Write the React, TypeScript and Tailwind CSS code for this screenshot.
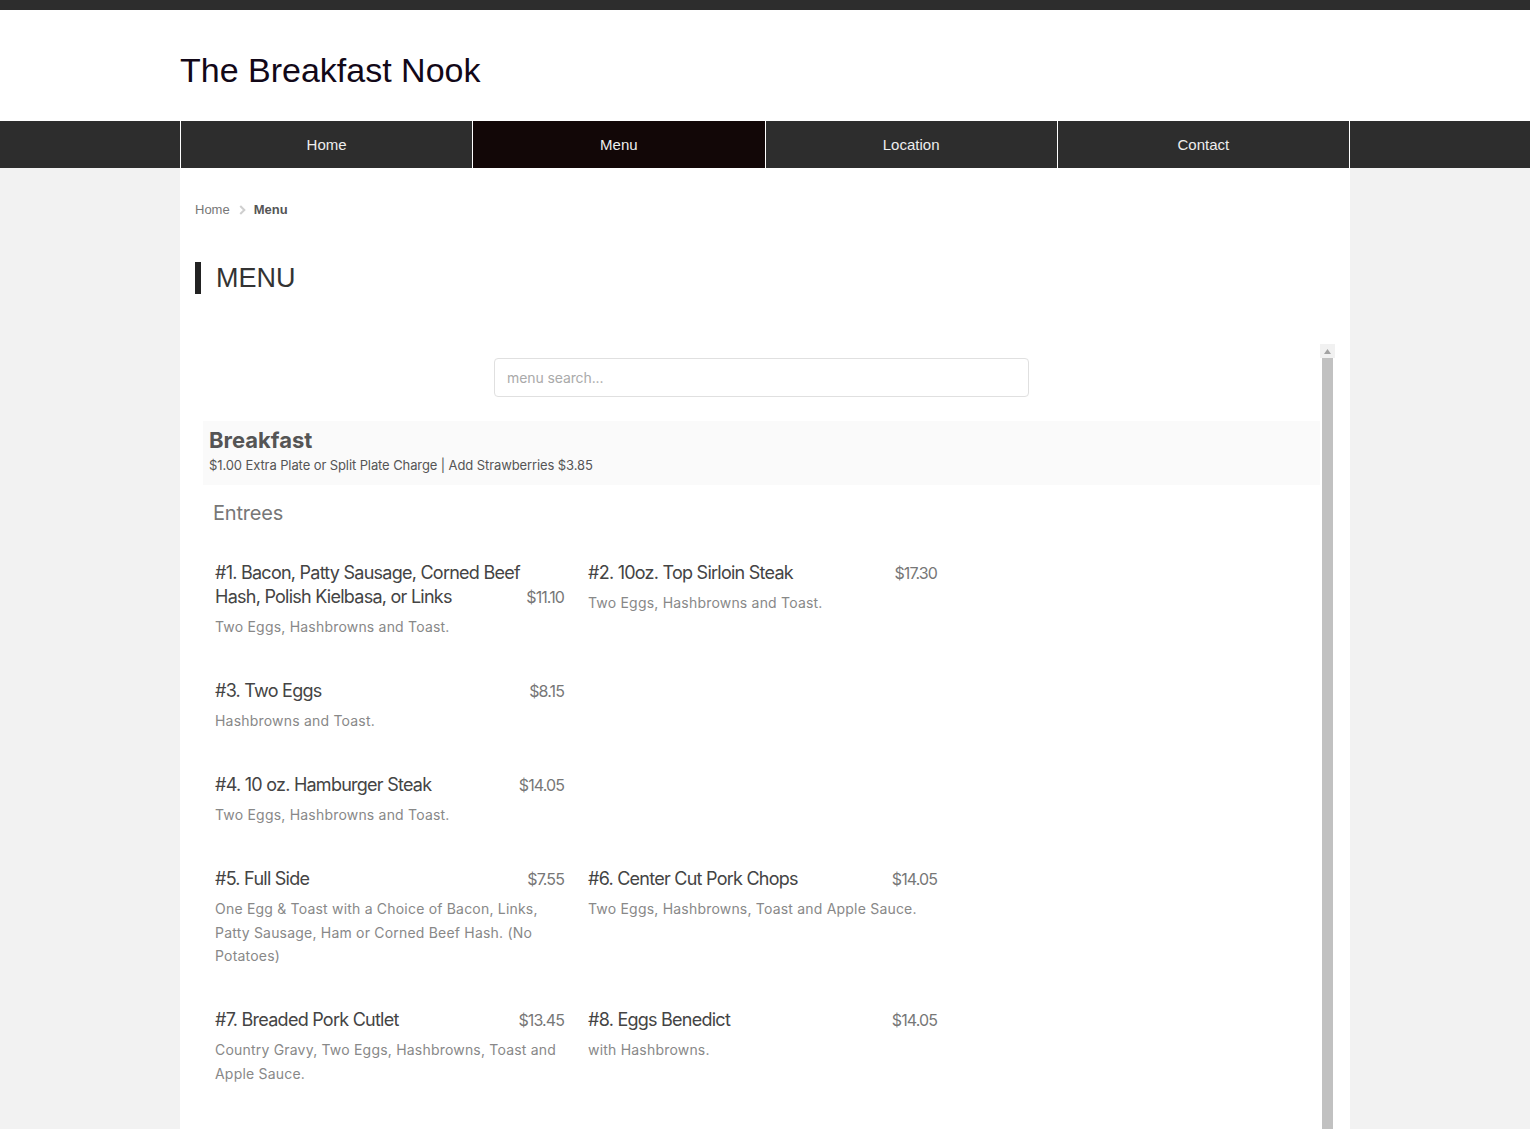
import React from "react";

const items = [
  [
    { t: "#1. Bacon, Patty Sausage, Corned Beef Hash, Polish Kielbasa, or Links", p: "$11.10", d: "Two Eggs, Hashbrowns and Toast." },
    { t: "#2. 10oz. Top Sirloin Steak", p: "$17.30", d: "Two Eggs, Hashbrowns and Toast." },
  ],
  [{ t: "#3. Two Eggs", p: "$8.15", d: "Hashbrowns and Toast." }],
  [{ t: "#4. 10 oz. Hamburger Steak", p: "$14.05", d: "Two Eggs, Hashbrowns and Toast." }],
  [
    { t: "#5. Full Side", p: "$7.55", d: "One Egg & Toast with a Choice of Bacon, Links, Patty Sausage, Ham or Corned Beef Hash. (No Potatoes)" },
    { t: "#6. Center Cut Pork Chops", p: "$14.05", d: "Two Eggs, Hashbrowns, Toast and Apple Sauce." },
  ],
  [
    { t: "#7. Breaded Pork Cutlet", p: "$13.45", d: "Country Gravy, Two Eggs, Hashbrowns, Toast and Apple Sauce." },
    { t: "#8. Eggs Benedict", p: "$14.05", d: "with Hashbrowns." },
  ],
  [
    { t: "#9. Chicken Fried Steak", p: "$14.05", d: "Country Gravy, Two Eggs, Hashbrowns and Toast." },
    { t: "#10. Ham Steak", p: "$13.45", d: "Two Eggs, Hashbrowns and Toast." },
  ],
];

const poppins = { fontFamily: "Inter, 'Noto Sans', sans-serif" };

function Item({ t, p, d }: { t: string; p: string; d: string }) {
  return (
    <div className="w-[349px]">
      <div className="flex items-end justify-between">
        <div className="text-[18px] leading-[24px] text-[#444] tracking-[-0.75px]">{t}</div>
        <div className="text-[16px] leading-[24px] text-[#777] tracking-[-0.9px] shrink-0">{p}</div>
      </div>
      <div className="mt-[6px] text-[14px] leading-[23.5px] text-[#888] tracking-[0.2px]">{d}</div>
    </div>
  );
}

export default function App() {
  return (
    <div className="min-h-screen bg-[#f2f2f2]" style={{ fontFamily: "'Liberation Sans', Arial, sans-serif" }}>
      <div className="h-[10px] bg-[#2d2d2d]" />
      <div className="bg-white h-[111px] flex items-center">
        <div className="w-[1170px] mx-auto pt-[8px]">
          <h1 className="text-[34px] text-[#120818] leading-none">The Breakfast Nook</h1>
        </div>
      </div>
      <div className="bg-[#2d2d2d] h-[47px]">
        <div className="w-[1170px] mx-auto flex h-full border-r border-white">
          {["Home", "Menu", "Location", "Contact"].map((n) => (
            <div
              key={n}
              className={`flex-1 flex items-center justify-center border-l border-white text-[15px] text-[#eeeeee] pt-[1px] ${n === "Menu" ? "bg-[#120707]" : ""}`}
            >
              {n}
            </div>
          ))}
        </div>
      </div>
      <div className="w-[1170px] mx-auto bg-white px-[15px] pt-[33px]">
        <div className="flex items-center text-[13px] h-[18px]">
          <span className="text-[#777]">Home</span>
          <svg width="14" height="14" viewBox="0 0 24 24" className="mx-[5px]" fill="none" stroke="#cfcfcf" strokeWidth="3.5">
            <path d="M9 5l7 7-7 7" />
          </svg>
          <span className="font-bold text-[#555]">Menu</span>
        </div>
        <div className="mt-[43px] flex items-center h-[32px] border-l-[6px] border-[#222] pl-[15px]">
          <h2 className="text-[27px] text-[#333] leading-none">MENU</h2>
        </div>
        <div className="mt-[50px] flex">
          <div className="flex-1 p-[8px] pr-0 pt-[14px]" style={poppins}>
            <div className="flex justify-center">
              <div className="w-[535px] h-[39px] border border-[#e0e0e0] rounded-[4px] flex items-center px-[12px] text-[14px] text-[#aaa] tracking-[-0.1px]">
                menu search...
              </div>
            </div>
            <div className="mt-[24px] bg-[#fafafa] px-[6px] pt-[4px] pb-[10px]">
              <div className="text-[22px] font-bold text-[#555] leading-[30px]">Breakfast</div>
              <div className="text-[13px] text-[#555] leading-[20px] tracking-[-0.1px]">
                $1.00 Extra Plate or Split Plate Charge | Add Strawberries $3.85
              </div>
            </div>
            <div className="px-[10px] pt-[14px] text-[20px] text-[#777] leading-[28px] tracking-[-0.2px]">Entrees</div>
            <div className="pl-[12px] pt-[34px] flex flex-col gap-[40.5px]">
              {items.map((row, i) => (
                <div key={i} className="flex gap-[24px]">
                  {row.map((it) => (
                    <Item key={it.t} {...it} />
                  ))}
                </div>
              ))}
            </div>
          </div>
          <div className="w-[15px] flex flex-col bg-white">
            <div className="h-[14px] bg-[#f1f1f1] flex items-center justify-center">
              <svg width="7" height="5" viewBox="0 0 7 5">
                <path d="M3.5 0L7 5H0z" fill="#a3a3a3" />
              </svg>
            </div>
            <div className="flex-1 pl-[2px] pr-[2px]">
              <div className="h-full bg-[#c1c1c1]" />
            </div>
          </div>
        </div>
      </div>
    </div>
  );
}
